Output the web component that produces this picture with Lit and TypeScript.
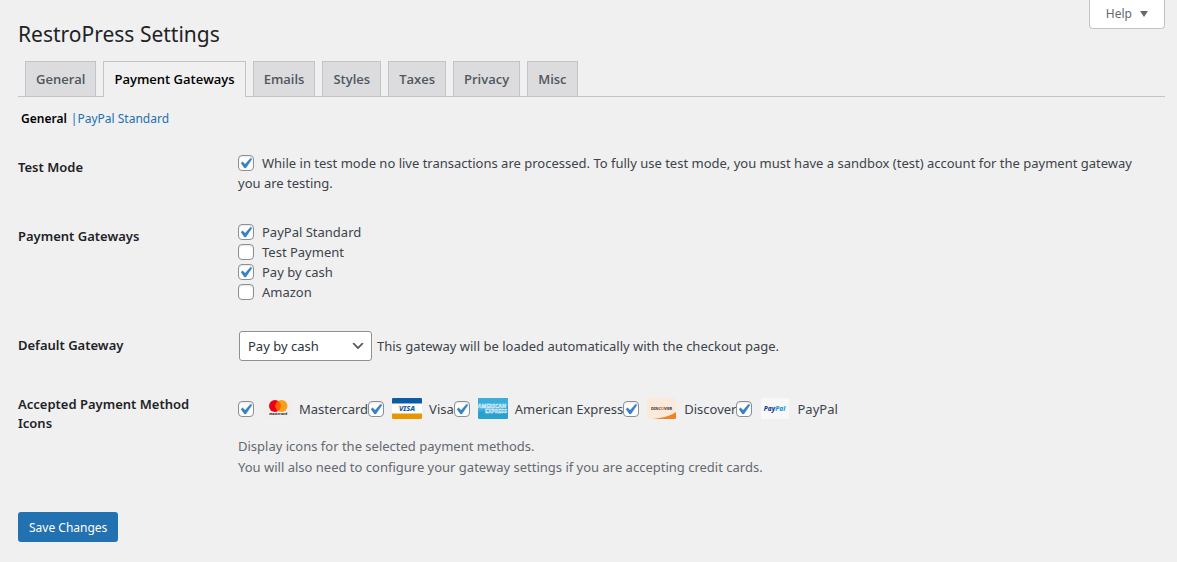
import { LitElement, html, css, svg } from "lit";
import { customElement, property, state } from "lit/decorators.js";
import { classMap } from "lit/directives/class-map.js";

const TABS = ["General", "Payment Gateways", "Emails", "Styles", "Taxes", "Privacy", "Misc"];

const GATEWAYS = [
  { id: "paypal", label: "PayPal Standard", on: true },
  { id: "manual", label: "Test Payment", on: false },
  { id: "cash", label: "Pay by cash", on: true },
  { id: "amazon", label: "Amazon", on: false },
];

const CARDS = [
  { id: "mastercard", label: "Mastercard" },
  { id: "visa", label: "Visa" },
  { id: "amex", label: "American Express" },
  { id: "discover", label: "Discover" },
  { id: "paypal", label: "PayPal" },
];

const ART: Record<string, unknown> = {
  mastercard: svg`
    <rect x="1" width="29" height="21" rx="1" fill="#f1efee" />
    <circle cx="13" cy="8" r="6" fill="#eb001b" />
    <circle cx="19.5" cy="8" r="6" fill="#f79e1b" />
    <path d="M16.2 3a6 6 0 0 1 0 10a6 6 0 0 1 0-10z" fill="#ff5f00" />
    <text x="16.3" y="16.5" font-size="3.1" font-weight="800" text-anchor="middle" fill="#2c2424">mastercard</text>`,
  visa: svg`
    <rect width="30" height="21" rx="1" fill="#fff" />
    <path d="M1 0h28a1 1 0 0 1 1 1v4.6H0V1a1 1 0 0 1 1-1z" fill="#0e5ba5" />
    <path d="M0 15.4h30V20a1 1 0 0 1-1 1H1a1 1 0 0 1-1-1z" fill="#e79800" />
    <text x="15" y="13" font-size="7.4" font-weight="800" font-style="italic" text-anchor="middle" fill="#0e5ba5">VISA</text>
    <path d="M6 7.5l3 1 .6 2z" fill="#e79800" />`,
  amex: svg`
    <rect width="30" height="21" rx="1" fill="#2a9fd2" />
    <path d="M1 0h28a1 1 0 0 1 1 1v7L0 14V1a1 1 0 0 1 1-1z" fill="#3badda" />
    <text x="14" y="9.6" font-size="5.2" font-weight="800" text-anchor="middle" fill="#7cc8e8" stroke="#e4f4fb" stroke-width=".4">AMERICAN</text>
    <text x="18" y="15.4" font-size="5.2" font-weight="800" text-anchor="middle" fill="#7cc8e8" stroke="#e4f4fb" stroke-width=".4">EXPRESS</text>`,
  discover: svg`
    <rect width="29" height="21" rx="1" fill="#faeadb" />
    <path d="M29 14v6a1 1 0 0 1-1 1H6c9-1 17-3 23-7z" fill="#f58220" />
    <text x="14.5" y="12" font-size="4.2" font-weight="800" text-anchor="middle" fill="#3b3533">DISC<tspan fill="#f26a1b">O</tspan>VER</text>`,
  paypal: svg`
    <rect x="1" width="28" height="21" rx="1" fill="#f8f8f8" />
    <text x="14.5" y="12.5" font-size="6.6" font-weight="800" font-style="italic" text-anchor="middle" fill="#21409a">Pay<tspan fill="#1a9bdc">Pal</tspan></text>`,
};

const controls = css`
  input[type="checkbox"] {
    appearance: none;
    flex: none;
    width: 16px;
    height: 16px;
    margin: 0;
    border: 1px solid #8c8f94;
    border-radius: 4px;
    background: #fff -4px -3px / 21px no-repeat;
    box-shadow: inset 0 1px 2px rgba(0, 0, 0, 0.1);
  }
  input[type="checkbox"]:checked {
    background-image: url("data:image/svg+xml,%3Csvg xmlns='http://www.w3.org/2000/svg' viewBox='0 0 20 20'%3E%3Cpath d='M14.83 4.89l1.34.94-5.81 8.38H9.02L5.78 9.67l1.34-1.25 2.57 2.4z' fill='%233582c4' stroke='%233582c4' stroke-width='.4'/%3E%3C/svg%3E");
  }
`;

@customElement("card-option")
export class CardOption extends LitElement {
  @property() kind = "";
  @property() label = "";

  static styles = [
    controls,
    css`
      .option {
        display: flex;
        align-items: center;
      }
      .art {
        width: 30px;
        height: 21px;
        margin: 0 7px 0 8px;
      }
    `,
  ];

  render() {
    return html`<label class="option">
      <input type="checkbox" name=${this.kind} checked />
      <svg class="art" viewBox="0 0 30 21" aria-hidden="true">${ART[this.kind]}</svg>
      ${this.label}
    </label>`;
  }
}

@customElement("app-root")
export class AppRoot extends LitElement {
  @state() private tab = "Payment Gateways";

  static styles = [
    controls,
    css`
      :host {
        display: block;
        box-sizing: border-box;
        min-height: 100vh;
        padding: 0 12px 20px 18px;
        background: #f0f0f0;
        color: #3c434a;
        font: 13px/20px "Noto Sans", "Open Sans", sans-serif;
      }
      a {
        color: #2271b1;
        text-decoration: none;
      }
      .top {
        display: flex;
        justify-content: space-between;
        align-items: flex-start;
      }
      h1 {
        margin: 19px 0 12px;
        color: #1d2327;
        font-size: 21px;
        font-weight: 400;
        line-height: 30px;
      }
      .help {
        height: 29px;
        padding: 0 16px;
        border: 1px solid #c3c4c7;
        border-top: 0;
        border-radius: 0 0 4px 4px;
        background: #fff;
        color: #646970;
        font: inherit;
        font-size: 12px;
        display: flex;
        align-items: center;
        gap: 8px;
      }
      .arrow {
        width: 8px;
        height: 6px;
        fill: #646970;
      }
      .tabs {
        display: flex;
        gap: 7px;
        padding-left: 7px;
        border-bottom: 1px solid #c3c4c7;
      }
      .tab {
        padding: 7px 10px;
        border: 1px solid #c3c4c7;
        border-bottom: 0;
        background: #dcdcde;
        color: #50575e;
        font-family: "Open Sans", "Noto Sans", sans-serif;
        font-weight: 600;
      }
      .tab.active {
        margin-bottom: -1px;
        background: #f0f0f0;
        color: #000;
      }
      .sub {
        display: flex;
        gap: 4px;
        margin: 12px 0 9px 3px;
        font-size: 12px;
      }
      .sub .current {
        color: #000;
        font-weight: 600;
      }
      .second {
        color: #2271b1;
      }
      .row {
        display: grid;
        grid-template-columns: 180px 1fr;
        column-gap: 40px;
        padding-right: 20px;
      }
      .name {
        padding: 20px 0 18px;
        color: #1d2327;
        font-weight: 600;
        line-height: 19px;
      }
      .value {
        padding: 15px 0 14px;
      }
      .check {
        display: block;
      }
      .check input {
        margin: 2px 8px 0 0;
        vertical-align: top;
      }
      .pick {
        display: flex;
        align-items: center;
        gap: 5px;
      }
      select {
        appearance: none;
        height: 30px;
        margin-left: 1px;
        padding: 0 24px 0 8px;
        border: 1px solid #8c8f94;
        border-radius: 3px;
        background: #fff right 5px center / 16px no-repeat
          url("data:image/svg+xml,%3Csvg xmlns='http://www.w3.org/2000/svg' viewBox='0 0 20 20'%3E%3Cpath d='M5 6l5 5 5-5 2 1-7 7-7-7 2-1z' fill='%23555'/%3E%3C/svg%3E");
        color: #2c3338;
        font: inherit;
        width: 133px;
      }
      .cards {
        display: flex;
        flex-wrap: wrap;
        padding-top: 8px;
      }
      .note {
        margin: 17px 0 0;
        color: #646970;
        line-height: 21px;
      }
      .save {
        height: 30px;
        margin: 20px 0 0;
        padding: 1px 11px 0;
        border: 0;
        border-radius: 3px;
        background: #2271b1;
        color: #fff;
        font: inherit;
        font-size: 12px;
      }
    `,
  ];

  private pick(event: Event, tab: string) {
    event.preventDefault();
    this.tab = tab;
  }

  render() {
    return html`
      <header class="top">
        <h1>RestroPress Settings</h1>
        <button class="help" type="button">
          Help
          <svg class="arrow" viewBox="0 0 8 6" aria-hidden="true"><path d="M0 0h8L4 6z" /></svg>
        </button>
      </header>
      <nav class="tabs" aria-label="Settings sections">
        ${TABS.map(
          (t) => html`<a
            href="#"
            class=${classMap({ tab: true, active: t === this.tab })}
            @click=${(e: Event) => this.pick(e, t)}
            >${t}</a
          >`
        )}
      </nav>
      <nav class="sub" aria-label="Gateway sections">
        <a class="current" href="#">General</a>
        <span class="second">|<a href="#">PayPal Standard</a></span>
      </nav>
      <form @submit=${(e: Event) => e.preventDefault()}>
        <div class="row" role="group" aria-labelledby="test">
          <div class="name" id="test">Test Mode</div>
          <div class="value">
            <label class="check"
              ><input type="checkbox" name="test_mode" checked />While in test mode no live transactions are
              processed. To fully use test mode, you must have a sandbox (test) account for the payment gateway
              you are testing.</label
            >
          </div>
        </div>
        <div class="row" role="group" aria-labelledby="gateways">
          <div class="name" id="gateways">Payment Gateways</div>
          <div class="value">
            ${GATEWAYS.map(
              (g) => html`<label class="check"
                ><input type="checkbox" name=${g.id} ?checked=${g.on} />${g.label}</label
              >`
            )}
          </div>
        </div>
        <div class="row">
          <label class="name" for="default">Default Gateway</label>
          <div class="value pick">
            <select id="default">
              <option>PayPal Standard</option>
              <option selected>Pay by cash</option>
            </select>
            <label for="default">This gateway will be loaded automatically with the checkout page.</label>
          </div>
        </div>
        <div class="row" role="group" aria-labelledby="icons">
          <div class="name" id="icons">Accepted Payment Method Icons</div>
          <div class="value">
            <div class="cards">
              ${CARDS.map((c) => html`<card-option kind=${c.id} label=${c.label}></card-option>`)}
            </div>
            <p class="note">
              Display icons for the selected payment methods.<br />You will also need to configure your gateway
              settings if you are accepting credit cards.
            </p>
          </div>
        </div>
        <button class="save" type="submit">Save Changes</button>
      </form>
    `;
  }
}
